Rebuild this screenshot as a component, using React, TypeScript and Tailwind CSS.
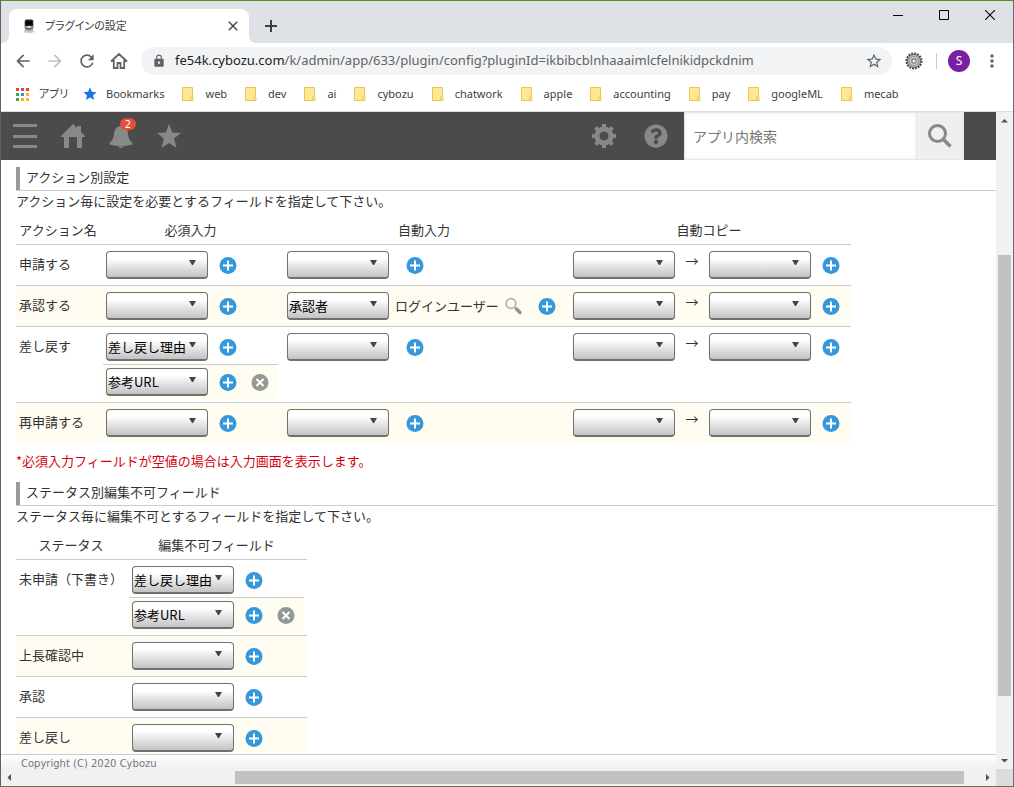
import type { ReactNode } from 'react'
import { FaQuestionCircle } from 'react-icons/fa'
import {
  MdArrowBack,
  MdArrowForward,
  MdClose,
  MdLock,
  MdMoreVert,
  MdRefresh,
  MdStar,
  MdStarBorder,
} from 'react-icons/md'

type Action = {
  name: string
  required: string[]
  auto: { field: string; value?: string }
}

const bookmarks = [
  'web',
  'dev',
  'ai',
  'cybozu',
  'chatwork',
  'apple',
  'accounting',
  'pay',
  'googleML',
  'mecab',
]

const actions: Action[] = [
  { name: '申請する', required: [''], auto: { field: '' } },
  {
    name: '承認する',
    required: [''],
    auto: { field: '承認者', value: 'ログインユーザー' },
  },
  {
    name: '差し戻す',
    required: ['差し戻し理由', '参考URL'],
    auto: { field: '' },
  },
  { name: '再申請する', required: [''], auto: { field: '' } },
]

const statuses = [
  { name: '未申請（下書き）', fields: ['差し戻し理由', '参考URL'] },
  { name: '上長確認中', fields: [''] },
  { name: '承認', fields: [''] },
  { name: '差し戻し', fields: [''] },
]

const appColors = [
  'bg-[#ea4335]',
  'bg-[#ea4335]',
  'bg-[#ea4335]',
  'bg-[#34a853]',
  'bg-[#4285f4]',
  'bg-[#fbbc05]',
  'bg-[#34a853]',
  'bg-[#fbbc05]',
  'bg-[#fbbc05]',
]

function FolderIcon() {
  return (
    <svg width="12" height="14" viewBox="0 0 12 14" className="shrink-0">
      <path d="M.5.5h10v13H.5z" fill="#ffe793" stroke="#eac54f" />
      <path d="M8.5 13.5v-3.2q1.2-1.4 2.5 0v3.2z" fill="#ffe793" stroke="#eac54f" />
    </svg>
  )
}

function TrainIcon() {
  return (
    <svg width="14" height="14" viewBox="0 0 14 14">
      <path d="M4.5.5h5q1.8 0 1.8 2v6q0 2-2 2H4.700q-2 0-2-2v-6q0-2 1.800-2z" fill="#222" />
      <path d="M4 2.500h6v3H4z" fill="#000" />
      <path d="M3 7h8v2.500H3z" fill="#7da878" />
      <path d="M5.500 7h3v2h-3z" fill="#ddd" />
      <path d="M4 10l-1.500 3.500M10 10l1.500 3.500M4.500 11.500h5M4 13h6" stroke="#999" fill="none" />
    </svg>
  )
}

function ExtensionGear() {
  return (
    <svg width="18" height="18" viewBox="0 0 18 18">
      <circle cx="9" cy="9" r="7.500" fill="none" stroke="#444" strokeWidth="2" strokeDasharray="1.900 1.040" />
      <circle cx="9" cy="9" r="6.600" fill="#b5b5b5" stroke="#666" strokeWidth="1" />
      <circle cx="9" cy="9" r="4.600" fill="#ccc" stroke="#8a8a8a" strokeWidth=".8" />
      <circle cx="9" cy="9" r="2.800" fill="#777" />
      <circle cx="9" cy="9" r="1.600" fill="#f4f4f4" />
    </svg>
  )
}

function SettingsGear() {
  return (
    <svg width="24" height="24" viewBox="0 0 24 24" fill="none" stroke="currentColor">
      <circle cx="12" cy="12" r="7" strokeWidth="5" />
      <path
        d="M12 0v4M12 20v4M0 12h4M20 12h4M3.500 3.500l3 3M17.500 17.500l3 3M20.500 3.500l-3 3M6.500 17.500l-3 3"
        strokeWidth="4"
      />
    </svg>
  )
}

function PlusButton() {
  return (
    <button type="button" aria-label="追加" className="size-[18px] shrink-0">
      <svg width="18" height="18" viewBox="0 0 18 18">
        <circle cx="9" cy="9.500" r="8.500" fill="#3498db" />
        <path d="M9 4.500v10M4 9.500h10" stroke="#fff" strokeWidth="2" />
      </svg>
    </button>
  )
}

function RemoveButton() {
  return (
    <button type="button" aria-label="削除" className="size-[18px] shrink-0">
      <svg width="18" height="18" viewBox="0 0 18 18">
        <circle cx="9" cy="9.500" r="8.500" fill="#949994" />
        <path d="M5.500 6l7 7M12.500 6l-7 7" stroke="#fff" strokeWidth="2" />
      </svg>
    </button>
  )
}

function FieldSelect({ value, label }: { value: string; label: string }) {
  return (
    <span className="relative shrink-0">
      <select
        aria-label={label}
        defaultValue={value}
        className="block h-7 w-[102px] appearance-none rounded border border-b-2 border-[#707070] bg-linear-to-b from-white from-25% to-[#c3c3c3] pl-px text-[13px] text-black"
      >
        <option>{value}</option>
      </select>
      <svg
        width="7"
        height="5"
        viewBox="0 0 7 5"
        className="pointer-events-none absolute top-[9px] right-3"
      >
        <path d="M0 0h7L4 5H3z" fill="#444" />
      </svg>
    </span>
  )
}

function FieldList({ fields, label }: { fields: string[]; label: string }) {
  return (
    <div className="w-[175px]">
      {fields.map((field, i) => (
        <div
          key={i}
          className="flex items-center p-[3px] not-first:border-t not-first:border-[#ccc] even:bg-[#fffcf2]"
        >
          <FieldSelect value={field} label={label} />
          <span className="ml-[11px] flex gap-[14px]">
            <PlusButton />
            {i > 0 && <RemoveButton />}
          </span>
        </div>
      ))}
    </div>
  )
}

function SectionHeading({ children }: { children: ReactNode }) {
  return (
    <h2 className="h-6 border-b border-[#ccc]">
      <span className="block h-[23px] border-l-4 border-[#999] pl-[6px] leading-5">
        {children}
      </span>
    </h2>
  )
}

function TableHead({ titles }: { titles: string[] }) {
  return (
    <thead>
      <tr className="h-8">
        {titles.map((title) => (
          <th key={title} className="p-0 pt-1 font-normal">
            {title}
          </th>
        ))}
      </tr>
    </thead>
  )
}

function ActionTable() {
  return (
    <table className="w-[835px] table-fixed border-separate border-spacing-0">
      <colgroup>
        <col className="w-[84px]" />
        <col className="w-[181px]" />
        <col className="w-[286px]" />
        <col className="w-[284px]" />
      </colgroup>
      <TableHead titles={['アクション名', '必須入力', '自動入力', '自動コピー']} />
      <tbody>
        {actions.map(({ name, required, auto }) => (
          <tr key={name} className="align-top even:bg-[#fffcf2]">
            <td className="border-t border-[#ccc] px-[3px] py-[9px] leading-5">{name}</td>
            <td className="border-t border-[#ccc] p-[3px]">
              <FieldList fields={required} label={`${name} 必須入力`} />
            </td>
            <td className="border-t border-[#ccc] p-[3px]">
              <div className="flex items-center p-[3px]">
                <FieldSelect value={auto.field} label={`${name} 自動入力`} />
                {auto.value && (
                  <span className="ml-[6px] flex items-center gap-[6px]">
                    {auto.value}
                    <button type="button" aria-label="ユーザー選択">
                      <svg width="18" height="18" viewBox="0 0 18 18" fill="none">
                        <circle cx="6" cy="6.500" r="4.800" stroke="#b4b4b4" strokeWidth="1.800" />
                        <path d="M9.500 10l2 2" stroke="#b0b5ae" strokeWidth="2" />
                        <path d="M11.500 12l3.500 3.500" stroke="#8f948d" strokeWidth="3.500" strokeLinecap="round" />
                      </svg>
                    </button>
                  </span>
                )}
                <span className={auto.value ? 'ml-[15px] flex' : 'ml-[17px] flex'}>
                  <PlusButton />
                </span>
              </div>
            </td>
            <td className="border-t border-[#ccc] p-[3px]">
              <div className="flex items-center p-[3px]">
                <FieldSelect value="" label={`${name} コピー元`} />
                <span className="w-[34px] self-start text-center leading-5">→</span>
                <FieldSelect value="" label={`${name} コピー先`} />
                <span className="ml-[11px] flex">
                  <PlusButton />
                </span>
              </div>
            </td>
          </tr>
        ))}
      </tbody>
    </table>
  )
}

function StatusTable() {
  return (
    <table className="w-[291px] table-fixed border-separate border-spacing-0">
      <colgroup>
        <col className="w-[110px]" />
        <col className="w-[181px]" />
      </colgroup>
      <TableHead titles={['ステータス', '編集不可フィールド']} />
      <tbody>
        {statuses.map(({ name, fields }) => (
          <tr key={name} className="align-top even:bg-[#fffcf2]">
            <td className="border-t border-[#ccc] py-[9px] pl-[3px] leading-5 whitespace-nowrap">
              {name}
            </td>
            <td className="border-t border-[#ccc] p-[3px]">
              <FieldList fields={fields} label={`${name} 編集不可フィールド`} />
            </td>
          </tr>
        ))}
      </tbody>
    </table>
  )
}

function BrowserChrome() {
  return (
    <div className="font-['Noto_Sans','Noto_Sans_CJK_JP',sans-serif] text-[#3c4043]">
      <div className="flex h-[42px] items-end bg-[#dee1e6] pl-2">
        <div className="relative flex h-[34px] w-60 items-center rounded-t-lg bg-white pr-2 pl-[13px]">
          <svg width="8" height="8" viewBox="0 0 8 8" className="absolute bottom-0 -left-2">
            <path d="M8 0v8H0q8 0 8-8z" fill="#fff" />
          </svg>
          <svg width="8" height="8" viewBox="0 0 8 8" className="absolute -right-2 bottom-0">
            <path d="M0 0v8h8Q0 8 0 0z" fill="#fff" />
          </svg>
          <TrainIcon />
          <span className="ml-[9px] grow text-[11px] [font-feature-settings:'palt']">
            プラグインの設定
          </span>
          <button type="button" aria-label="タブを閉じる">
            <MdClose size={16} />
          </button>
        </div>
        <button type="button" aria-label="新しいタブ" className="ml-4 self-center pt-2">
          <svg width="12" height="12" viewBox="0 0 12 12">
            <path d="M6 0v12M0 6h12" stroke="#3c4043" strokeWidth="2" />
          </svg>
        </button>
        <div className="mr-[18px] ml-auto flex gap-9 self-start pt-[9px] text-black">
          <button type="button" aria-label="最小化">
            <svg width="10" height="10" viewBox="0 0 10 10">
              <path d="M0 5.500h10" stroke="currentColor" />
            </svg>
          </button>
          <button type="button" aria-label="最大化">
            <svg width="10" height="10" viewBox="0 0 10 10">
              <path d="M.5.5h9v9h-9z" fill="none" stroke="currentColor" />
            </svg>
          </button>
          <button type="button" aria-label="閉じる">
            <svg width="10" height="10" viewBox="0 0 10 10">
              <path d="M0 0l10 10M10 0L0 10" stroke="currentColor" strokeWidth="1.100" />
            </svg>
          </button>
        </div>
      </div>

      <div className="flex h-9 items-center bg-white pr-[11px] pl-3 text-[#5f6368]">
        <div className="flex shrink-0 gap-3">
          <button type="button" aria-label="戻る">
            <MdArrowBack size={20} />
          </button>
          <button type="button" aria-label="進む" className="text-[#bdc1c6]">
            <MdArrowForward size={20} />
          </button>
          <button type="button" aria-label="再読み込み">
            <MdRefresh size={20} />
          </button>
          <button type="button" aria-label="ホーム">
            <svg width="20" height="20" viewBox="0 0 20 20" fill="none">
              <path d="M2 10.500L10 3l8 7.500M4.800 9v8h3.700v-5h3v5h3.700V9" stroke="currentColor" strokeWidth="1.800" />
            </svg>
          </button>
        </div>
        <label className="ml-3 flex h-7 grow items-center rounded-full bg-[#f1f3f4] pr-[9px] pl-[11px]">
          <MdLock size={14} />
          <span className="relative ml-[9px] grow text-[13px]">
            <span className="pointer-events-none whitespace-nowrap">
              <span className="text-[#202124]">fe54k.cybozu.com</span>
              /k/admin/app/633/plugin/config?pluginId=ikbibcblnhaaaimlcfelnikidpckdnim
            </span>
            <input
              aria-label="アドレス"
              className="absolute inset-0 w-full bg-transparent outline-none"
            />
          </span>
          <MdStarBorder size={18} />
        </label>
        <div className="ml-[13px] flex shrink-0 items-center">
          <ExtensionGear />
          <span className="ml-[13px] h-4 w-px bg-[#c8cacd]" />
          <span className="ml-[11px] flex size-[22px] items-center justify-center rounded-full bg-[#7b1fa2] text-xs text-white">
            S
          </span>
          <button type="button" aria-label="メニュー" className="ml-3">
            <MdMoreVert size={20} />
          </button>
        </div>
      </div>

      <nav className="flex h-[33px] items-center overflow-hidden border-b border-[#dadce0] bg-white pb-[2px] pl-[15px] text-[11px] whitespace-nowrap">
        <a href="#apps" className="flex w-[66px] items-center gap-[10px]">
          <span className="grid grid-cols-3 gap-[2px]">
            {appColors.map((color, i) => (
              <span key={i} className={`size-[3px] ${color}`} />
            ))}
          </span>
          <span className="[font-feature-settings:'palt']">アプリ</span>
        </a>
        <a href="#bookmarks" className="mr-[18px] flex items-center gap-2">
          <MdStar size={16} className="text-[#1a73e8]" />
          Bookmarks
        </a>
        <div className="flex gap-[18px]">
          {bookmarks.map((name) => (
            <a key={name} href={`#${name}`} className="flex items-center gap-[11px]">
              <FolderIcon />
              {name}
            </a>
          ))}
        </div>
      </nav>
    </div>
  )
}

function AppHeader() {
  return (
    <header className="flex h-12 shrink-0 items-center bg-[#4b4b4b] pr-8 pl-3 text-[#888]">
      <div className="flex grow gap-6">
        <button type="button" aria-label="メニュー">
          <svg width="24" height="24" viewBox="0 0 24 24">
            <path d="M0 1.500h24M0 12.500h24M0 22.500h24" stroke="currentColor" strokeWidth="3" />
          </svg>
        </button>
        <a href="#home" aria-label="ホーム">
          <svg width="24" height="24" viewBox="0 0 24 24" fill="currentColor">
            <path d="M12 0l4 4V2h4v6l4 4v1h-3v11h-5V13H8v11H3V13H0v-1z" />
          </svg>
        </a>
        <button type="button" aria-label="通知" className="relative">
          <svg width="24" height="24" viewBox="0 0 24 24" fill="currentColor">
            <path d="M12 2q6 0 7 8 .5 6 4.500 9v1.500q-6 1.500-11.500 1.500T.500 20.500V19q4-3 4.500-9 1-8 7-8z" />
            <path d="M9 22.500h6q-1 1.500-3 1.500t-3-1.500z" />
          </svg>
          <span className="absolute -top-[6px] left-[11px] flex h-3 w-4 items-center justify-center rounded-full bg-[#e74c3c] font-['DejaVu_Sans',sans-serif] text-[10px] text-white">
            2
          </span>
        </button>
        <button type="button" aria-label="お気に入り">
          <svg width="24" height="24" viewBox="0 0 24 24" fill="currentColor">
            <path d="M12 0l3.300 8.600 8.700.4-6.900 5.600L19.500 24 12 19l-7.500 5 2.400-9.400L0 9l8.700-.4z" />
          </svg>
        </button>
      </div>
      <button type="button" aria-label="設定">
        <SettingsGear />
      </button>
      <button type="button" aria-label="ヘルプ" className="ml-7">
        <FaQuestionCircle size={24} />
      </button>
      <form className="ml-4 flex h-12">
        <input
          type="search"
          aria-label="アプリ内検索"
          placeholder="アプリ内検索"
          className="w-[233px] border border-[#e3e7e8] bg-white px-2 text-[14px] shadow-[inset_0_0_4px_#eee] placeholder:text-[#777]"
        />
        <button
          type="button"
          aria-label="検索"
          className="flex w-[47px] items-center justify-center border-y border-r border-[#e3e7e8] bg-[#efefef]"
        >
          <svg width="24" height="24" viewBox="0 0 24 24" fill="none" stroke="#888">
            <circle cx="9.500" cy="9.500" r="8" strokeWidth="3" />
            <path d="M15 15l7.500 7.500" strokeWidth="3.500" />
          </svg>
        </button>
      </form>
    </header>
  )
}

function ScrollArrow({ d }: { d: string }) {
  return (
    <span className="flex size-[17px] shrink-0 items-center justify-center">
      <svg width="7" height="7" viewBox="0 0 7 7">
        <path d={d} fill="#505050" />
      </svg>
    </span>
  )
}

export default function App() {
  return (
    <div className="flex h-screen flex-col overflow-hidden border border-t-[#5b8f1f] border-r-[#6b6b6b] border-b-[#6b6b6b] border-l-[#6b5b5b] bg-white">
      <BrowserChrome />
      <div className="flex min-h-0 grow">
        <div className="flex min-w-0 grow flex-col font-['Noto_Sans_CJK_JP',sans-serif] text-[13px] text-[#333]">
          <AppHeader />
          <main className="min-h-0 flex-1 overflow-hidden pt-[7px] pl-[15px] leading-5">
            <section>
              <SectionHeading>アクション別設定</SectionHeading>
              <p className="h-[21px]">アクション毎に設定を必要とするフィールドを指定して下さい。</p>
              <ActionTable />
              <p className="mt-2 mb-[11px] text-[#d7000f]">
                *必須入力フィールドが空値の場合は入力画面を表示します。
              </p>
            </section>
            <section>
              <SectionHeading>ステータス別編集不可フィールド</SectionHeading>
              <p className="h-[21px]">ステータス毎に編集不可とするフィールドを指定して下さい。</p>
              <StatusTable />
            </section>
          </main>
          <footer className="h-[15px] shrink-0 border-t border-[#ccc] bg-linear-to-b from-white to-[#f0f0f0] pl-5 font-['DejaVu_Sans',sans-serif] text-[10px] leading-[18px] text-[#777]">
            Copyright (C) 2020 Cybozu
          </footer>
        </div>
        <div className="flex w-[17px] shrink-0 flex-col bg-[#f1f1f1]">
          <ScrollArrow d="M0 5.500h7L3.500 2z" />
          <span className="grow-[126]" />
          <span className="mr-[2px] ml-[2px] grow-[441] bg-[#c1c1c1]" />
          <span className="grow-[56]" />
          <ScrollArrow d="M0 2h7L3.500 5.500z" />
        </div>
      </div>
      <div className="flex h-[17px] shrink-0 bg-[#f1f1f1]">
        <ScrollArrow d="M5 0v7L1.500 3.500z" />
        <span className="grow-[217]" />
        <span className="my-[2px] grow-[729] bg-[#c1c1c1]" />
        <span className="grow-[15]" />
        <ScrollArrow d="M2 0v7l3.500-3.500z" />
        <span className="w-[17px] shrink-0 bg-[#dcdcdc]" />
      </div>
    </div>
  )
}
